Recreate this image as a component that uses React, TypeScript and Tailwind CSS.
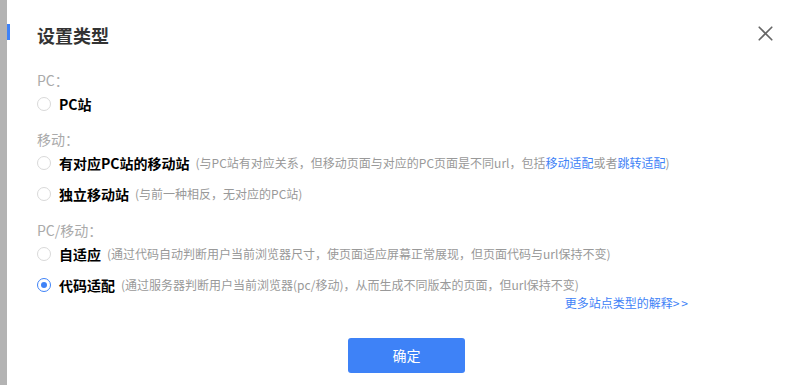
import React, { useState } from 'react';
import { X } from 'lucide-react';

type Option = {
  id: string;
  label: string;
  desc?: React.ReactNode;
};

const groups: { title: string; gap: string; options: Option[] }[] = [
  {
    title: 'PC：',
    gap: 'mt-[24px]',
    options: [{ id: 'pc', label: 'PC站' }],
  },
  {
    title: '移动：',
    gap: 'mt-[15px]',
    options: [
      {
        id: 'm1',
        label: '有对应PC站的移动站',
        desc: (
          <>
            (与PC站有对应关系，但移动页面与对应的PC页面是不同url，包括
            <span className="text-[#3e82f7]">移动适配</span>或者
            <span className="text-[#3e82f7]">跳转适配</span>)
          </>
        ),
      },
      { id: 'm2', label: '独立移动站', desc: '(与前一种相反，无对应的PC站)' },
    ],
  },
  {
    title: 'PC/移动：',
    gap: 'mt-[16px]',
    options: [
      {
        id: 'r1',
        label: '自适应',
        desc: '(通过代码自动判断用户当前浏览器尺寸，使页面适应屏幕正常展现，但页面代码与url保持不变)',
      },
      {
        id: 'r2',
        label: '代码适配',
        desc: '(通过服务器判断用户当前浏览器(pc/移动)，从而生成不同版本的页面，但url保持不变)',
      },
    ],
  },
];

const Radio = ({ checked }: { checked: boolean }) => (
  <span
    className={`flex h-[14px] w-[14px] shrink-0 items-center justify-center rounded-full border ${
      checked ? 'border-[#3e82f7]' : 'border-[#d9d9d9]'
    }`}
  >
    {checked && <span className="h-[6px] w-[6px] rounded-full bg-[#3e82f7]" />}
  </span>
);

export default function App() {
  const [selected, setSelected] = useState('r2');

  return (
    <div
      className="flex h-[385px] w-[787px] overflow-hidden bg-white"
      style={{ fontFamily: '"Noto Sans CJK SC", "Liberation Sans", sans-serif' }}
    >
      <div className="w-[7px] shrink-0 bg-[#b3b3b3]" />
      <div className="flex flex-1 flex-col">
        {/* header */}
        <div className="flex items-start pt-[24px]">
          <span className="h-[16px] w-[3px] bg-[#3e82f7]" />
          <h2 className="ml-[27px] text-[18px] font-bold leading-[22px] text-[#333]">设置类型</h2>
          <button className="ml-auto mr-[9px] -mt-[3px] text-[#666]">
            <X size={25} strokeWidth={1.6} />
          </button>
        </div>

        {/* options */}
        <div className="pl-[30px]">
          {groups.map((g) => (
            <div key={g.title} className={g.gap}>
              <div className="text-[14px] leading-[20px] text-[#aaa]">{g.title}</div>
              {g.options.map((o, i) => (
                <div
                  key={o.id}
                  onClick={() => setSelected(o.id)}
                  className={`flex cursor-pointer items-center gap-[8px] ${i === 0 ? 'mt-[4px]' : 'mt-[11px]'}`}
                >
                  <Radio checked={selected === o.id} />
                  <span className="whitespace-nowrap text-[14px] font-bold leading-[20px] text-black">
                    {o.label}
                  </span>
                  {o.desc && (
                    <span className="-ml-[2px] whitespace-nowrap text-[12px] leading-[20px] text-[#999]">
                      {o.desc}
                    </span>
                  )}
                </div>
              ))}
            </div>
          ))}
        </div>

        <div className="flex justify-end pr-[97px]">
          <a className="cursor-pointer text-[12px] leading-[16px] text-[#3e82f7]">
            更多站点类型的解释<span className="tracking-[2px]">&gt;&gt;</span>
          </a>
        </div>

        <div className="mt-[27px] pl-[341px]">
          <button className="h-[35px] w-[117px] rounded-[3px] bg-[#3e82f7] text-[14px] text-white">确定</button>
        </div>
      </div>
    </div>
  );
}
